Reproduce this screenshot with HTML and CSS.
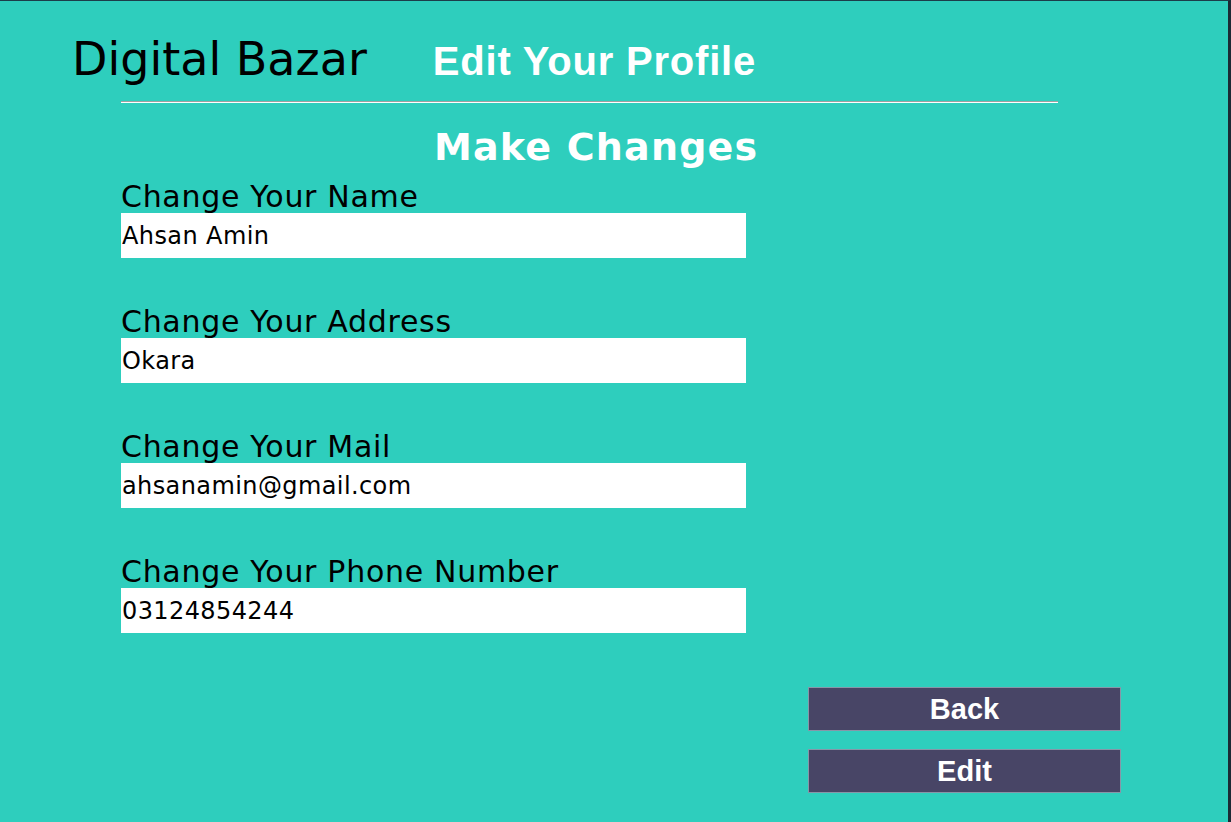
FILE: index.html
```html
<!DOCTYPE html>
<html lang="en">
<head>
<meta charset="utf-8">
<title>Edit Your Profile - Digital Bazar</title>
<link rel="stylesheet" href="styles.css">
</head>
<body>
<div class="page">
  <header class="topbar">
    <div class="logo">Digital Bazar</div>
    <h1 class="page-title">Edit Your Profile</h1>
  </header>
  <hr class="divider">
  <h2 class="section-title">Make Changes</h2>
  <form class="profile-form">
    <div class="field">
      <label class="field-label" for="name">Change Your Name</label>
      <input class="field-input" id="name" type="text" value="Ahsan Amin">
    </div>
    <div class="field">
      <label class="field-label" for="address">Change Your Address</label>
      <input class="field-input" id="address" type="text" value="Okara">
    </div>
    <div class="field">
      <label class="field-label" for="mail">Change Your Mail</label>
      <input class="field-input" id="mail" type="text" value="ahsanamin@gmail.com">
    </div>
    <div class="field">
      <label class="field-label" for="phone">Change Your Phone Number</label>
      <input class="field-input" id="phone" type="text" value="03124854244">
    </div>
    <div class="actions">
      <button type="button" class="btn">Back</button>
      <button type="button" class="btn">Edit</button>
    </div>
  </form>
</div>
</body>
</html>
```

FILE: styles.css
```css
html, body {
  margin: 0;
  padding: 0;
}

body {
  background: #2ecebd;
  height: 100vh;
  box-sizing: border-box;
  border-top: 1px solid #1c3d4a;
  border-right: 3px solid #1b2a35;
  overflow: hidden;
  font-family: "DejaVu Sans", sans-serif;
  color: #000;
}

.page {
  padding-top: 30px;
}

.topbar {
  display: flex;
  align-items: baseline;
  gap: 66px;
  padding-left: 72px;
  height: 56px;
}

.logo {
  font-family: "DejaVu Sans", sans-serif;
  font-size: 46px;
  line-height: 56px;
  font-weight: normal;
  color: #000;
}

.page-title {
  margin: 0;
  font-family: "Liberation Sans", Arial, sans-serif;
  font-weight: bold;
  font-size: 40px;
  line-height: 56px;
  letter-spacing: 0.8px;
  color: #fff;
}

.divider {
  margin: 14px 0 0 121px;
  width: 937px;
  height: 0;
  border: 0;
  border-top: 1px solid #a0a0a0;
  border-bottom: 1px solid #ffffff;
}

.section-title {
  margin: 22px 0 0 434px;
  font-family: "DejaVu Sans", sans-serif;
  font-weight: bold;
  font-size: 38px;
  line-height: 44px;
  letter-spacing: 1.2px;
  color: #fff;
}

.profile-form {
  margin: 12px 0 0 121px;
  display: flex;
  flex-direction: column;
}

.field {
  display: flex;
  flex-direction: column;
  margin-bottom: 48px;
}

.field-label {
  font-size: 30px;
  line-height: 32px;
  letter-spacing: 0.7px;
  color: #000;
}

.field-input {
  width: 625px;
  height: 45px;
  box-sizing: border-box;
  border: 0;
  padding: 0 1px;
  margin: 0;
  background: #fff;
  font-family: "DejaVu Sans", sans-serif;
  font-size: 24px;
  letter-spacing: 0.4px;
  color: #000;
  outline: none;
}

.actions {
  display: flex;
  flex-direction: column;
  gap: 18px;
  margin-top: 6px;
  margin-left: 687px;
}

.btn {
  width: 313px;
  height: 44px;
  box-sizing: border-box;
  background: #484566;
  border: 1px solid #8796a8;
  color: #fff;
  font-family: "Liberation Sans", Arial, sans-serif;
  font-weight: bold;
  font-size: 29px;
  line-height: 42px;
  padding: 0;
  text-align: center;
}
```
